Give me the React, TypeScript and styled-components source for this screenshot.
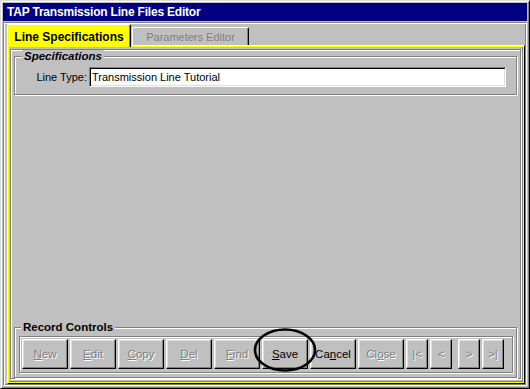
import React from "react";
import styled, { createGlobalStyle } from "styled-components";

const GlobalStyle = createGlobalStyle`
  html, body {
    margin: 0;
    padding: 0;
    background: #c0c0c0;
  }
  body {
    font-family: "Liberation Sans", Arial, sans-serif;
  }
`;

// Window chrome
const Window = styled.div`
  position: relative;
  width: 530px;
  height: 389px;
  box-sizing: border-box;
  padding: 2px;
  display: flex;
  flex-direction: column;
  background: #c0c0c0;
  border: 1px solid;
  border-color: #dfdfdf #000 #000 #dfdfdf;
  box-shadow: inset 1px 1px 0 #fff, inset -1px -1px 0 #808080;
`;

const TitleBar = styled.div`
  height: 18px;
  padding-left: 4px;
  background: #000080;
  color: #fff;
  font-size: 12px;
  font-weight: 700;
  line-height: 18px;
  letter-spacing: -0.2px;
  white-space: nowrap;
`;

const Client = styled.div`
  flex: 1;
  margin-top: 1px;
  padding: 1px 1px 1px 3px;
  display: flex;
  flex-direction: column;
  border: 1px solid;
  border-color: #808080 #fff #fff #808080;
  box-shadow: inset 1px 1px 0 #fff, inset -1px -1px 0 #808080;
`;

// Tabs
const TabRow = styled.div`
  height: 21px;
  display: flex;
  align-items: flex-end;
  gap: 1px;
`;

const Tab = styled.div<{ $active?: boolean }>`
  position: relative;
  z-index: ${(p) => (p.$active ? 1 : 0)};
  box-sizing: border-box;
  width: ${(p) => (p.$active ? 124 : 117)}px;
  height: ${(p) => (p.$active ? 23 : 18)}px;
  margin-bottom: ${(p) => (p.$active ? -2 : 0)}px;
  padding-top: ${(p) => (p.$active ? 2 : 1)}px;
  display: flex;
  align-items: center;
  justify-content: center;
  background: ${(p) => (p.$active ? "#ffff00" : "#c0c0c0")};
  border: 1px solid;
  border-bottom: none;
  border-color: #fff #000 transparent #fff;
  border-radius: 2px 2px 0 0;
  box-shadow: inset -1px 0 0 #808080;
  color: ${(p) => (p.$active ? "#000" : "#808080")};
  font-size: ${(p) => (p.$active ? 12 : 11)}px;
  font-weight: ${(p) => (p.$active ? 700 : 400)};
  white-space: nowrap;
`;

const Panel = styled.div`
  flex: 1;
  display: flex;
  flex-direction: column;
  border: 1px solid;
  border-color: #fff #000 #000 #fff;
  box-shadow: inset 0 0 0 1px #ffff00, inset -2px -2px 0 #808080;
  padding: 1px;
`;

const Frame = styled.div`
  flex: 1;
  margin: 2px 2px 3px 1px;
  display: flex;
  flex-direction: column;
  justify-content: space-between;
  border: 1px solid #808080;
  box-shadow: 1px 1px 0 #fff, inset 1px 1px 0 #fff;
`;

// Group boxes
const Group = styled.fieldset<{ $pad: string }>`
  margin: 0 3px 0 3px;
  padding: ${(p) => p.$pad};
  min-width: 0;
  border: 1px solid #808080;
  box-shadow: 1px 1px 0 #fff, inset 1px 1px 0 #fff;
`;

const Legend = styled.legend<{ $italic?: boolean; $indent: number }>`
  margin-left: ${(p) => p.$indent}px;
  padding: 0 2px;
  background: #c0c0c0;
  color: #000;
  font-size: 11.5px;
  font-weight: 700;
  font-style: ${(p) => (p.$italic ? "italic" : "normal")};
  line-height: 13px;
`;

const FieldRow = styled.div`
  display: flex;
  align-items: center;
  gap: 2px;
`;

const FieldLabel = styled.label`
  width: 72px;
  text-align: right;
  font-size: 11px;
  color: #000;
`;

const TextBox = styled.input`
  box-sizing: border-box;
  width: 417px;
  height: 20px;
  margin: 0;
  padding: 0 2px;
  background: #fff;
  border: 1px solid;
  border-color: #808080 #fff #fff #808080;
  box-shadow: inset 1px 1px 0 #000, inset -1px -1px 0 #dfdfdf;
  font-family: "Liberation Sans", Arial, sans-serif;
  font-size: 11px;
  color: #000;
  outline: none;
`;

// Record buttons
const ButtonStrip = styled.div`
  display: flex;
  padding: 2px 2px 3px 2px;
  border: 1px solid #808080;
  box-shadow: 1px 1px 0 #fff, inset 1px 1px 0 #fff;
`;

const Button = styled.button<{ $w: number; $gap: number }>`
  box-sizing: border-box;
  width: ${(p) => p.$w}px;
  height: 30px;
  margin: 0 0 0 ${(p) => p.$gap}px;
  padding: 0;
  background: #c0c0c0;
  border: 1px solid;
  border-color: #fff #000 #000 #fff;
  box-shadow: inset -1px -1px 0 #808080, inset 1px 1px 0 #dfdfdf;
  font-family: "Liberation Sans", Arial, sans-serif;
  font-size: 11.5px;
  color: ${(p) => (p.disabled ? "#808080" : "#000")};
  text-shadow: ${(p) => (p.disabled ? "1px 1px 0 #fff" : "none")};
  cursor: default;

  &:first-child {
    margin-left: 0;
  }

  u {
    text-decoration: underline;
    text-underline-offset: 1px;
  }
`;

const Oval = styled.svg`
  position: absolute;
  left: 251px;
  top: 325px;
  width: 66px;
  height: 48px;
  pointer-events: none;
`;

const buttons = [
  { pre: "", key: "N", post: "ew", w: 46, gap: 0, disabled: true },
  { pre: "", key: "E", post: "dit", w: 46, gap: 2, disabled: true },
  { pre: "", key: "C", post: "opy", w: 46, gap: 2, disabled: true },
  { pre: "", key: "D", post: "el", w: 46, gap: 2, disabled: true },
  { pre: "", key: "F", post: "ind", w: 46, gap: 2, disabled: true },
  { pre: "", key: "S", post: "ave", w: 46, gap: 2, disabled: false },
  { pre: "Ca", key: "n", post: "cel", w: 46, gap: 2, disabled: false },
  { pre: "Cl", key: "o", post: "se", w: 46, gap: 2, disabled: true },
  { pre: "|<", key: "", post: "", w: 22, gap: 2, disabled: true },
  { pre: "<", key: "", post: "", w: 22, gap: 2, disabled: true },
  { pre: ">", key: "", post: "", w: 22, gap: 6, disabled: true },
  { pre: ">|", key: "", post: "", w: 22, gap: 2, disabled: true },
];

export default function App() {
  return (
    <>
      <GlobalStyle />
      <Window>
        <TitleBar>TAP Transmission Line Files Editor</TitleBar>
        <Client>
          <TabRow>
            <Tab $active>Line Specifications</Tab>
            <Tab>Parameters Editor</Tab>
          </TabRow>
          <Panel>
            <Frame>
              <Group $pad="4px 7px 7px 0">
                <Legend $italic $indent={7}>
                  Specifications
                </Legend>
                <FieldRow>
                  <FieldLabel>Line Type:</FieldLabel>
                  <TextBox readOnly defaultValue="Transmission Line Tutorial" />
                </FieldRow>
              </Group>
              <Group $pad="2px 3px 4px 4px">
                <Legend $indent={2}>Record Controls</Legend>
                <ButtonStrip>
                  {buttons.map((b) => (
                    <Button
                      key={b.pre + b.key + b.post}
                      $w={b.w}
                      $gap={b.gap}
                      disabled={b.disabled}
                    >
                      {b.pre}
                      {b.key && <u>{b.key}</u>}
                      {b.post}
                    </Button>
                  ))}
                </ButtonStrip>
              </Group>
            </Frame>
          </Panel>
        </Client>
        <Oval viewBox="0 0 66 48">
          <ellipse cx="33" cy="24" rx="30" ry="20.5" fill="none" stroke="#000" strokeWidth="2.6" />
        </Oval>
      </Window>
    </>
  );
}
